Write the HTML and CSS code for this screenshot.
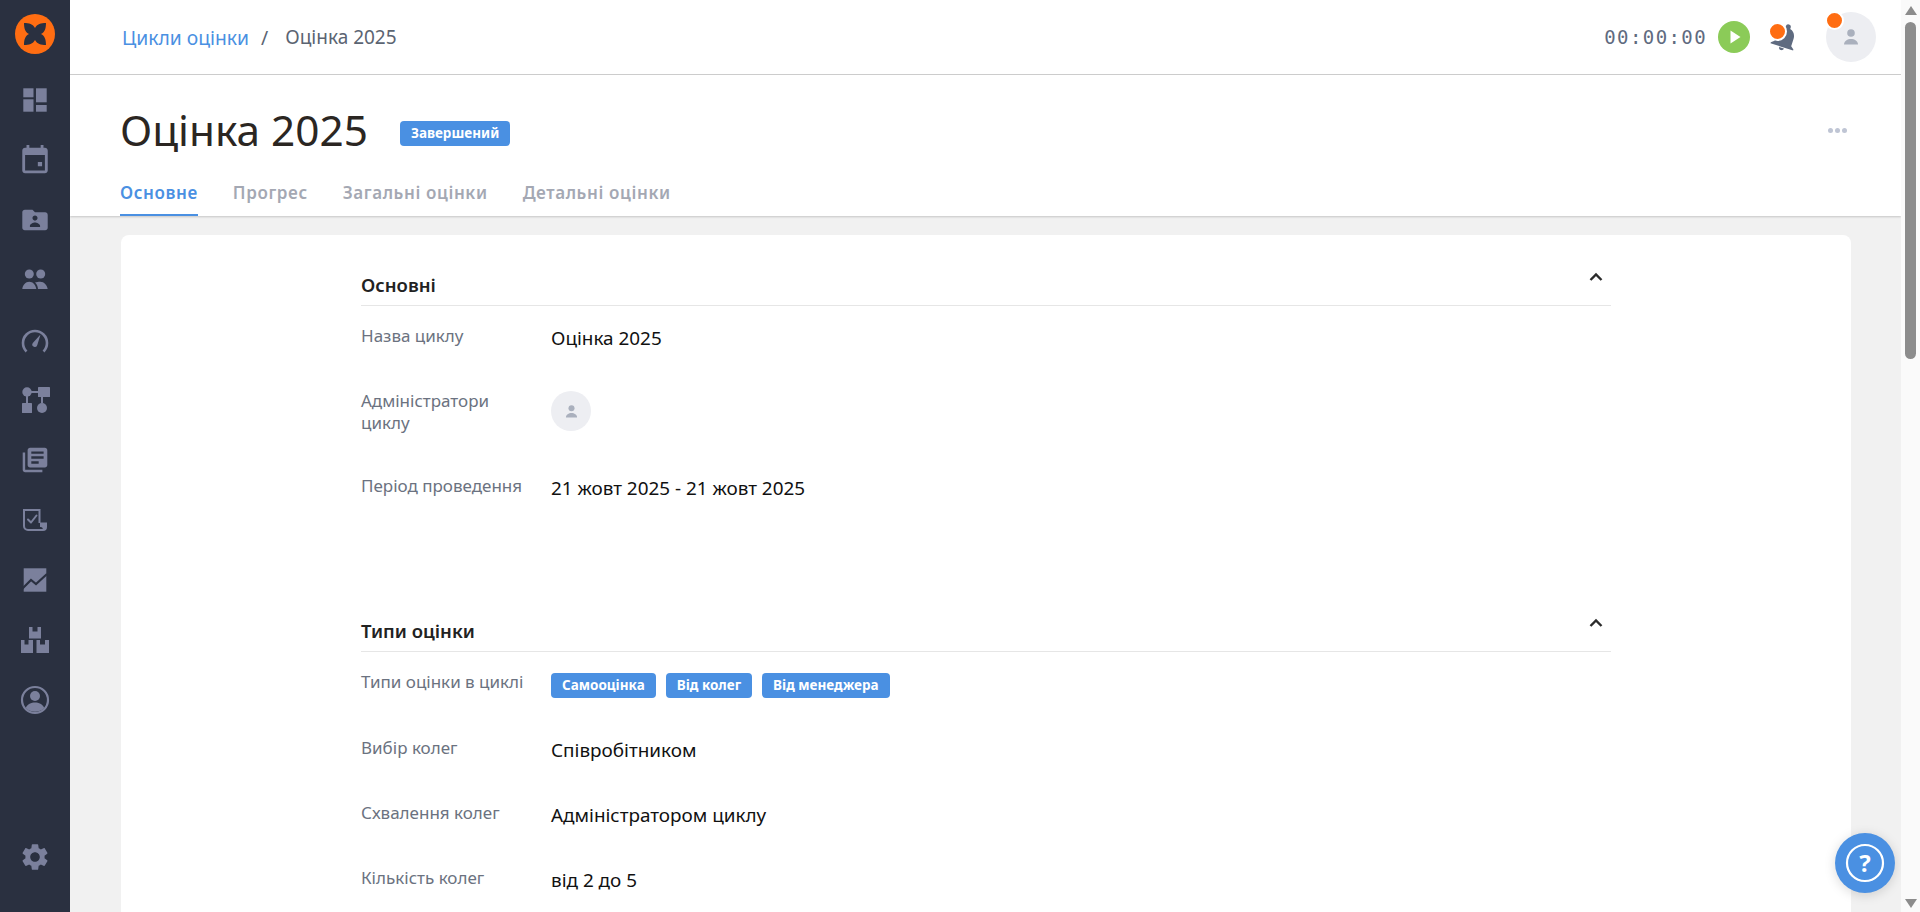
FILE: index.html
```html
<!DOCTYPE html>
<html lang="uk">
<head>
<meta charset="utf-8">
<title>Оцінка 2025</title>
<link rel="stylesheet" href="styles.css">
</head>
<body>
<div class="app">
  <aside class="sidebar">
    <div class="logo">
      <svg viewBox="0 0 40 40" width="40" height="40"><circle cx="20" cy="20" r="20" fill="#ff6d12"/><path fill="#2a3040" d="M20 14C22 10 26 9 31 9C31 14 30 18 26 20C30 22 31 26 31 31C26 31 22 30 20 26C18 30 14 31 9 31C9 26 10 22 14 20C10 18 9 14 9 9C14 9 18 10 20 14Z"/></svg>
    </div>
    <nav class="nav">
      <a class="nav-item"><svg class="ico" viewBox="0 0 30 30"><rect x="3.3" y="3.3" width="10.2" height="9"/><rect x="16" y="3.3" width="10.7" height="14"/><rect x="3.3" y="14.3" width="10.2" height="12.4"/><rect x="16" y="20" width="10.7" height="6.7"/></svg></a>
      <a class="nav-item"><svg class="ico" viewBox="1.4 1 21.2 21.2"><path d="M17 13h-3v3h3v-3zM16 1v2H8V1H6v2H5c-1.11 0-1.99.9-1.99 2L3 19c0 1.1.89 2 2 2h14c1.1 0 2-.9 2-2V5c0-1.1-.9-2-2-2h-1V1h-2zm3 18H5V8h14v11z"/></svg></a>
      <a class="nav-item"><svg class="ico" viewBox=".2 .2 23.6 23.6"><path fill-rule="evenodd" d="M20 6h-8l-2-2H4c-1.1 0-1.99.9-1.99 2L2 18c0 1.100.9 2 2 2h16c1.100 0 2-.9 2-2V8c0-1.100-.9-2-2-2zM12 8.500c1.100 0 2 .9 2 2s-.9 2-2 2-2-.9-2-2 .9-2 2-2zM16 17.500H8v-1c0-1.330 2.670-2.500 4-2.500s4 1.170 4 2.500v1z"/></svg></a>
      <a class="nav-item"><svg class="ico" viewBox="0 0 30 30"><circle cx="9.300" cy="9" r="4.500"/><circle cx="20.700" cy="9" r="4.500"/><path d="M2.300 24c.4-4 3.200-7.300 7-7.300 3.400 0 6.300 2.800 7 7.300zM18 24c-.2-2.900-1.200-5.200-3-6.600 1.500-.5 3.600-.7 5.200-.7 4 0 6.800 3.300 7.500 7.300z"/></svg></a>
      <a class="nav-item"><svg class="ico" viewBox="0 0 30 30"><path class="stroke" d="M6.500 26.500a12 12 0 1 1 17 0"/><path d="M20.500 9.500 17.300 20a2.500 2.500 0 1 1-4.500-2z"/></svg></a>
      <a class="nav-item"><svg class="ico" viewBox="0 0 30 30"><path class="stroke thin" d="M7 18V7h11M22 12v6"/><circle cx="7" cy="7" r="4.700"/><rect x="18" y="2" width="12" height="10" rx=".6"/><rect x="2" y="18" width="10" height="10" rx=".6"/><circle cx="22" cy="23" r="5"/></svg></a>
      <a class="nav-item"><svg class="ico" viewBox="-.2 -.2 24.400 24.400"><path d="M4 6H2v14c0 1.100.9 2 2 2h14v-2H4V6zm16-4H8c-1.100 0-2 .9-2 2v12c0 1.100.9 2 2 2h12c1.100 0 2-.9 2-2V4c0-1.100-.9-2-2-2zm-1 9H9V9h10v2zm-4 4H9v-2h6v2zm4-8H9V5h10v2z"/></svg></a>
      <a class="nav-item"><svg class="ico" viewBox="0 0 30 30"><path class="stroke thin" d="M19.500 18V5H4v16a4 4 0 0 0 4 4h15"/><path d="M20 17.500h7v4.500a4 4 0 0 1-4 4h-1c1-1 1-2 .5-3-.7-1.300-2.500-1-2.500-1z"/><path class="stroke check" d="M8 14.500l3 3 5.500-7"/></svg></a>
      <a class="nav-item"><svg class="ico" viewBox="0 0 30 30"><rect x="3.700" y="3.300" width="22.600" height="23.400"/><path class="cut" d="M2 24l9-9 5 4 11-10"/></svg></a>
      <a class="nav-item"><svg class="ico" viewBox="0 0 30 30"><path d="M9 2h3.500v4.500h5V2H21v11.500H9zM1 15h3.500v4.500h4V15H13v13H1zM16.500 15H20v4.500h5V15h4v13H16.500z"/></svg></a>
      <a class="nav-item"><svg class="ico" viewBox="0 0 30 30"><circle class="stroke thin-2" cx="15" cy="15" r="13"/><circle cx="15" cy="11" r="5"/><path d="M5.800 23c1.500-4 5.500-5.500 9.200-5.500s7.700 1.500 9.200 5.500a13 13 0 0 1-18.400 0z"/></svg></a>
    </nav>
    <a class="nav-gear"><svg class="ico gear" viewBox="0 0 24 24"><path d="M19.140 12.940c.04-.3.06-.61.06-.94 0-.32-.02-.64-.07-.94l2.030-1.580c.18-.14.23-.41.12-.61l-1.920-3.320c-.12-.22-.37-.29-.59-.22l-2.390.96c-.5-.38-1.030-.7-1.620-.94l-.36-2.540c-.04-.24-.24-.41-.48-.41h-3.840c-.24 0-.43.17-.47.41l-.36 2.540c-.59.24-1.130.57-1.620.94l-2.390-.96c-.22-.08-.47 0-.59.22L2.740 8.870c-.12.21-.08.47.12.61l2.030 1.580c-.05.3-.09.63-.09.94s.02.64.07.94l-2.030 1.580c-.18.14-.23.41-.12.61l1.920 3.320c.12.22.37.29.59.22l2.390-.96c.5.38 1.030.7 1.620.94l.36 2.540c.05.24.24.41.48.41h3.840c.24 0 .44-.17.47-.41l.36-2.540c.59-.24 1.130-.56 1.620-.94l2.390.96c.22.08.47 0 .59-.22l1.920-3.320c.12-.22.07-.47-.12-.61l-2.010-1.580zM12 15.600c-1.980 0-3.600-1.620-3.600-3.600s1.620-3.600 3.600-3.600 3.600 1.620 3.600 3.600-1.620 3.600-3.600 3.600z"/></svg></a>
  </aside>

  <main class="main">
    <header class="topbar">
      <div class="crumbs">
        <a class="crumb-link">Цикли оцінки</a>
        <span class="crumb-sep">/</span>
        <span class="crumb-current">Оцінка 2025</span>
      </div>
      <div class="top-actions">
        <span class="timer">00:00:00</span>
        <span class="play"><svg viewBox="0 0 32 32" width="32" height="32"><circle cx="16" cy="16" r="16" fill="#8bcb58"/><path fill="#fff" d="M12.500 9.500v13L22.500 16z"/></svg></span>
        <span class="bell">
          <svg viewBox="0 0 24 24" width="30" height="30"><path fill="#5f6b80" transform="rotate(18 12 12)" d="M12 23c1.100 0 2-.9 2-2h-4c0 1.100.9 2 2 2zm7-5.500v-6c0-3.300-1.800-6-5-6.800V3.500a2 2 0 0 0-4 0v1.200c-3.200.8-5 3.500-5 6.800v6l-2.500 2v.8h19v-.8z"/></svg>
          <i class="dot dot-bell"></i>
        </span>
        <span class="avatar avatar-lg">
          <svg class="person" viewBox="0 0 24 24" width="24" height="24"><circle cx="12" cy="8" r="3.800"/><path d="M5 19.500c0-3.500 3.500-5.500 7-5.500s7 2 7 5.500z"/></svg>
          <i class="dot dot-avatar"></i>
        </span>
      </div>
    </header>

    <section class="pagehead">
      <div class="title-row">
        <h1 class="title">Оцінка 2025</h1>
        <span class="tag tag-status">Завершений</span>
        <span class="more"><i></i><i></i><i></i></span>
      </div>
      <div class="tabs">
        <a class="tab tab-active">Основне</a>
        <a class="tab">Прогрес</a>
        <a class="tab">Загальні оцінки</a>
        <a class="tab">Детальні оцінки</a>
      </div>
    </section>

    <div class="content">
      <div class="card">
        <section class="section">
          <div class="section-head">
            <h2 class="section-title">Основні</h2>
            <svg class="chevron" viewBox="0 0 24 24" width="24" height="24"><path d="M6.500 15 12 9.500l5.500 5.500"/></svg>
          </div>
          <div class="row"><div class="label">Назва циклу</div><div class="value">Оцінка 2025</div></div>
          <div class="row row-avatar"><div class="label">Адміністратори циклу</div><div class="value"><span class="avatar avatar-sm"><svg class="person" viewBox="0 0 24 24" width="19" height="19"><circle cx="12" cy="8" r="3.800"/><path d="M5 19.500c0-3.500 3.500-5.500 7-5.500s7 2 7 5.500z"/></svg></span></div></div>
          <div class="row"><div class="label">Період проведення</div><div class="value">21 жовт 2025 - 21 жовт 2025</div></div>
        </section>
        <section class="section section-next">
          <div class="section-head">
            <h2 class="section-title">Типи оцінки</h2>
            <svg class="chevron" viewBox="0 0 24 24" width="24" height="24"><path d="M6.500 15 12 9.500l5.500 5.500"/></svg>
          </div>
          <div class="row"><div class="label">Типи оцінки в циклі</div><div class="value tags"><span class="tag">Самооцінка</span><span class="tag">Від колег</span><span class="tag">Від менеджера</span></div></div>
          <div class="row"><div class="label">Вибір колег</div><div class="value">Співробітником</div></div>
          <div class="row"><div class="label">Схвалення колег</div><div class="value">Адміністратором циклу</div></div>
          <div class="row"><div class="label">Кількість колег</div><div class="value">від 2 до 5</div></div>
        </section>
      </div>
    </div>

    <button class="help"><svg viewBox="0 0 60 60" width="60" height="60"><circle cx="30" cy="30" r="18" fill="none" stroke="#fff" stroke-width="2.200"/><text x="30" y="39" text-anchor="middle" class="help-q">?</text></svg></button>
  </main>

  <div class="scrollbar">
    <span class="arrow arrow-up"></span>
    <span class="thumb"></span>
    <span class="arrow arrow-down"></span>
  </div>
</div>
</body>
</html>
```
FILE: styles.css
```css
* { box-sizing: border-box; }
html, body { margin: 0; height: 100%; overflow: hidden; }
body {
  font-family: "Noto Sans", "Open Sans", sans-serif;
  color: #1f1f1f;
  background: #f1f1f1;
}
.app { display: flex; width: 1920px; height: 912px; }

/* sidebar */
.sidebar {
  width: 70px; flex: none; background: #2a3040;
  display: flex; flex-direction: column; align-items: center;
  padding-bottom: 39px;
}
.logo { height: 70px; padding-top: 14px; }
.logo svg { display: block; }
.nav { display: flex; flex-direction: column; }
.nav-item { height: 60px; display: flex; align-items: center; justify-content: center; }
.nav-gear { margin-top: auto; display: block; height: 32px; }
.ico { width: 30px; height: 30px; fill: #7b809c; display: block; }
.ico.gear { width: 32px; height: 32px; }
.ico .stroke { fill: none; stroke: #7b809c; stroke-width: 2.600; }
.ico .stroke.thin { stroke-width: 2; }
.ico .stroke.thin-2 { stroke-width: 2.200; }
.ico .stroke.check { stroke-width: 2; stroke-linecap: round; stroke-linejoin: round; }
.ico .cut { fill: none; stroke: #2a3040; stroke-width: 2.200; }

/* main */
.main { flex: 1; min-width: 0; height: 912px; overflow: hidden; position: relative; }
.topbar {
  height: 75px; background: #fff; border-bottom: 1px solid #cfcfcf;
  display: flex; align-items: center; justify-content: space-between;
  padding: 0 0 0 52px;
}
.crumbs { display: flex; align-items: center; font-size: 19.300px; }
.crumb-link { color: #4a90e2; }
.crumb-sep { color: #5b6472; margin: 0 17px 0 12px; }
.crumb-current { color: #5b6472; font-size: 19px; }
.top-actions { display: flex; align-items: center; padding-right: 25px; }
.timer {
  font-family: "DejaVu Sans Mono", monospace; font-size: 19px; color: #5f6b80;
  letter-spacing: 1.400px; margin-right: 11px;
}
.play { display: block; width: 32px; height: 32px; margin-right: 20px; }
.play svg { display: block; }
.bell { display: block; position: relative; width: 30px; height: 30px; margin-right: 26px; }
.bell svg { display: block; }
.dot {
  position: absolute; display: block; width: 19px; height: 19px;
  background: #ff6d12; border: 2px solid #fff; border-radius: 50%;
}
.dot-bell { left: -2px; top: 0; }
.dot-avatar { left: -1px; top: -1px; }
.avatar { display: flex; align-items: center; justify-content: center; border-radius: 50%; background: #edeef2; position: relative; }
.avatar-lg { width: 50px; height: 50px; }
.avatar-sm { width: 40px; height: 40px; margin-top: 1px; }
.person { fill: #aab0bd; display: block; }

/* page head */
.pagehead {
  height: 141px; background: #fff; padding: 0 0 0 50px;
  box-shadow: 0 1px 2px rgba(0, 0, 0, .18);
  position: relative;
}
.title-row { display: flex; align-items: center; height: 106px; padding-top: 4px; }
.title { margin: 0; font-size: 42.300px; font-weight: 400; color: #2b2622; line-height: 56px; }
.tag {
  display: inline-block; height: 25px; line-height: 25px; padding: 0 11px;
  background: #4a90e2; color: #fff; font-size: 13.500px; font-weight: 700;
  border-radius: 4px; white-space: nowrap;
}
.tag-status { margin-left: 32px; margin-top: 6px; }
.more { margin-left: auto; margin-right: 54px; display: flex; gap: 2px; }
.more i { display: block; width: 5px; height: 5px; border-radius: 50%; background: #bfc5d4; }
.tabs { display: flex; gap: 35px; height: 35px; }
.tab {
  font-size: 17px; font-weight: 600; color: #a4a8b3; letter-spacing: .6px;
  height: 35px; line-height: 24px; white-space: nowrap;
}
.tab-active { color: #4a90e2; border-bottom: 2px solid #4a90e2; }

/* content */
.content { padding: 19px 50px 0 51px; }
.card { background: #fff; border-radius: 8px; padding: 35px 240px 0; height: 800px; }
.section-head {
  display: flex; justify-content: space-between; align-items: flex-start;
  height: 36px; border-bottom: 1px solid #e6e6e6;
}
.section-title { margin: 0; font-size: 18.500px; font-weight: 600; line-height: 29px; color: #222; }
.chevron { fill: none; stroke: #2b2b2b; stroke-width: 2.400; margin: -5px 0 0 0; transform: translateX(-3px); display: block; }
.section-next { margin-top: 115px; }
.row { display: flex; margin-bottom: 39px; min-height: 26px; }
.section-head + .row { margin-top: 19px; }
.row-avatar { min-height: 46px; }
.label { width: 190px; flex: none; padding-right: 20px; font-size: 17px; line-height: 22px; color: #6b7280; }
.value { font-size: 18.900px; line-height: 26px; color: #111; }
.tags { display: flex; gap: 10px; padding-top: 2px; }

/* help */
.help {
  position: absolute; left: 1765px; top: 833px; width: 60px; height: 60px;
  padding: 0; border: 0; border-radius: 50%; background: #4a90e2;
  box-shadow: 0 2px 12px rgba(0, 0, 0, .15);
}
.help svg { display: block; }
.help-q { font-family: "Noto Sans", sans-serif; font-size: 24px; font-weight: 700; fill: #fff; }

/* scrollbar */
.scrollbar {
  width: 19px; flex: none; background: #fafafa; display: flex; flex-direction: column; align-items: center;
  padding: 6px 0 4px;
}
.thumb { display: block; width: 11px; height: 337px; margin-top: 7px; background: #8c8c8c; border-radius: 6px; }
.arrow { display: block; width: 0; height: 0; border-left: 6px solid transparent; border-right: 6px solid transparent; }
.arrow-up { border-bottom: 9px solid #8c8c8c; }
.arrow-down { border-top: 9px solid #8c8c8c; margin-top: auto; }
```
